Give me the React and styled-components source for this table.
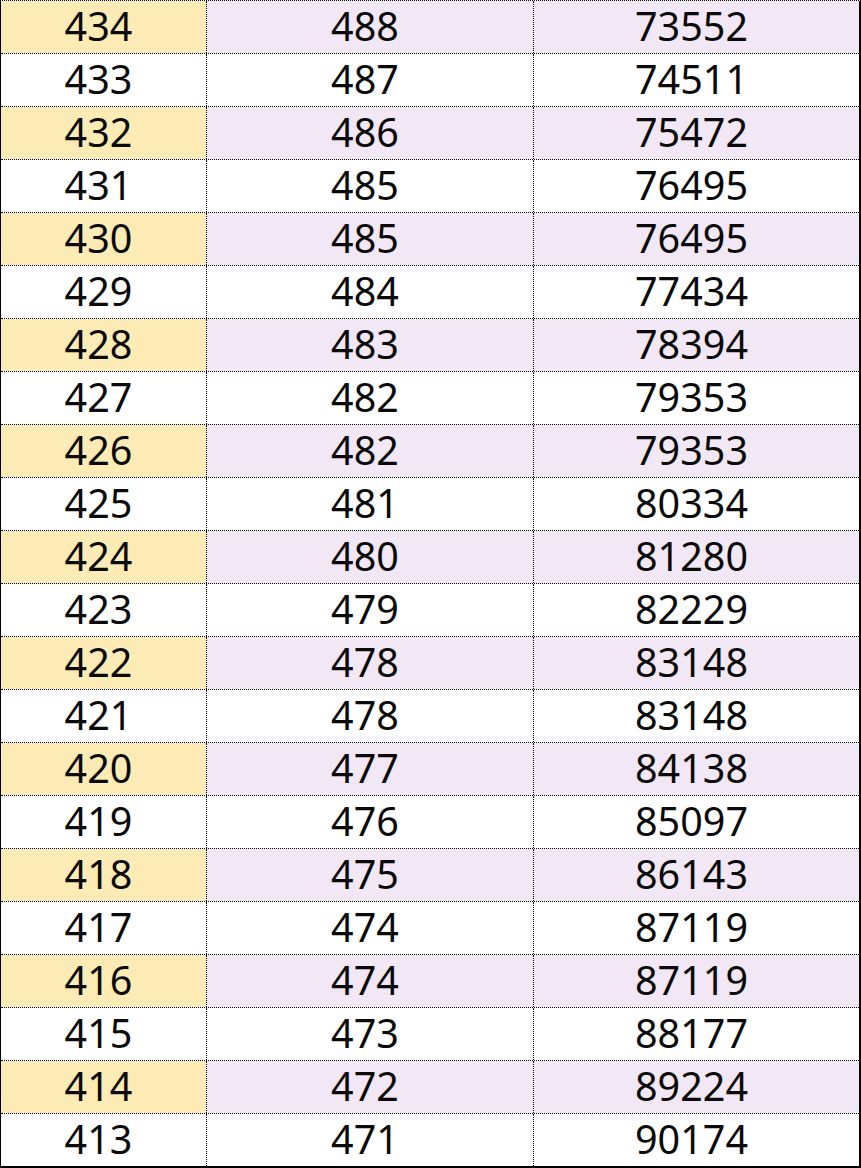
import React from "react";
import styled, { createGlobalStyle } from "styled-components";

const Global = createGlobalStyle`
  html, body { margin: 0; padding: 0; background: #ffffff; }
  body { font-family: "Noto Sans", "Open Sans", sans-serif; }
`;

const rows = [
  [434, 488, 73552],
  [433, 487, 74511],
  [432, 486, 75472],
  [431, 485, 76495],
  [430, 485, 76495],
  [429, 484, 77434],
  [428, 483, 78394],
  [427, 482, 79353],
  [426, 482, 79353],
  [425, 481, 80334],
  [424, 480, 81280],
  [423, 479, 82229],
  [422, 478, 83148],
  [421, 478, 83148],
  [420, 477, 84138],
  [419, 476, 85097],
  [418, 475, 86143],
  [417, 474, 87119],
  [416, 474, 87119],
  [415, 473, 88177],
  [414, 472, 89224],
  [413, 471, 90174],
];

const Table = styled.div`
  width: 861px;
  box-sizing: border-box;
  border-top: 1px dotted #000;
  border-left: 1px solid #000;
  border-right: 2px solid #000;
  border-bottom: 2px solid #000;
  display: flex;
  flex-direction: column;
`;

const Row = styled.div`
  display: grid;
  grid-template-columns: 206px 327px 1fr;
  height: 53px;
  box-sizing: border-box;
  border-bottom: 1px dotted #000;
  &:last-child {
    border-bottom: none;
    height: 52px;
  }
`;

const Cell = styled.div`
  box-sizing: border-box;
  display: flex;
  align-items: center;
  justify-content: center;
  padding-right: 10px;
  padding-bottom: 1px;
  font-size: 39.5px;
  line-height: 1;
  color: #0a0a0a;
  background: ${(p) => p.$bg};
  border-right: ${(p) => (p.$last ? "none" : "1px dotted #000")};
`;

export default function App() {
  return (
    <>
      <Global />
      <Table>
        {rows.map((r, i) => {
          const shaded = i % 2 === 0;
          return (
            <Row key={i}>
              <Cell $bg={shaded ? "#fdebb5" : "#ffffff"}>{r[0]}</Cell>
              <Cell $bg={shaded ? "#f2e7f5" : "#ffffff"}>{r[1]}</Cell>
              <Cell $bg={shaded ? "#f2e7f5" : "#ffffff"} $last>
                {r[2]}
              </Cell>
            </Row>
          );
        })}
      </Table>
    </>
  );
}
